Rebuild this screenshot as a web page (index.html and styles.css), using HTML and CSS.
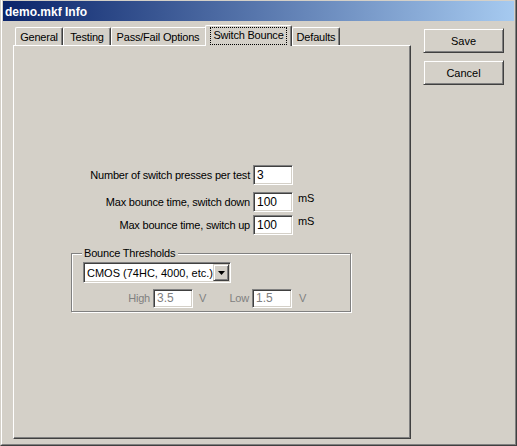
FILE: index.html
```html
<!DOCTYPE html>
<html>
<head>
<meta charset="utf-8">
<link rel="stylesheet" href="styles.css">
</head>
<body>
<div class="window">
  <div class="frame">
    <div class="titlebar"><span class="title">demo.mkf Info</span></div>
    <div class="body">
      <div class="tabctl">
        <div class="tabs">
          <div class="tab t-general">General</div>
          <div class="tab t-testing">Testing</div>
          <div class="tab t-pass">Pass/Fail Options</div>
          <div class="tab sel"><span class="focus">Switch Bounce</span></div>
          <div class="tab t-defaults">Defaults</div>
        </div>
        <div class="panel">
          <div class="form">
            <div class="row r1">
              <span class="lbl">Number of switch presses per test</span>
              <span class="tb">3</span>
            </div>
            <div class="row r2">
              <span class="lbl">Max bounce time, switch down</span>
              <span class="tb">100</span>
              <span class="unit">mS</span>
            </div>
            <div class="row r3">
              <span class="lbl">Max bounce time, switch up</span>
              <span class="tb">100</span>
              <span class="unit">mS</span>
            </div>
            <fieldset class="group">
              <legend class="legend">Bounce Thresholds</legend>
              <div class="combo">
                <span class="combo-text">CMOS (74HC, 4000, etc.)</span>
                <span class="combo-btn"><svg width="7" height="4" viewBox="0 0 7 4"><path d="M0 0H7L3.5 4Z" fill="#000"/></svg></span>
              </div>
              <div class="levels">
                <span class="dl dl-high">High</span>
                <span class="tb dis">3.5</span>
                <span class="dl dv">V</span>
                <span class="dl dl-low">Low</span>
                <span class="tb dis">1.5</span>
                <span class="dl dv2">V</span>
              </div>
            </fieldset>
          </div>
        </div>
      </div>
      <div class="buttons">
        <div class="btn">Save</div>
        <div class="btn">Cancel</div>
      </div>
    </div>
  </div>
</div>
</body>
</html>
```

FILE: styles.css
```css
* { box-sizing: border-box; }
html, body {
  margin: 0;
  padding: 0;
  background: #d4d0c8;
}
body {
  font-family: "Liberation Sans", Arial, sans-serif;
  font-size: 11px;
  letter-spacing: -0.2px;
  color: #000;
}
.window {
  width: 517px;
  height: 446px;
  border-left: 1px solid #d4d0c8;
  border-right: 1px solid #404040;
  border-bottom: 1px solid #404040;
  background: #d4d0c8;
}
.frame {
  height: 100%;
  border-left: 1px solid #fff;
  border-right: 1px solid #808080;
  border-bottom: 1px solid #808080;
  padding: 1px 1px 1px 1px;
  display: flex;
  flex-direction: column;
}
.titlebar {
  height: 20px;
  flex: none;
  background: linear-gradient(to right, #0a246a, #a6caf0);
  display: flex;
  align-items: center;
  padding-left: 2px;
  padding-top: 1px;
}
.title {
  color: #fff;
  font-weight: bold;
  font-size: 12px;
  letter-spacing: 0;
  line-height: 14px;
}
.body {
  flex: 1;
  display: flex;
  padding: 4px 0 0 10px;
  gap: 12px;
}
.tabctl {
  width: 398px;
  display: flex;
  flex-direction: column;
}
.tabs {
  height: 20px;
  display: flex;
  align-items: flex-end;
  padding-left: 2px;
  position: relative;
  z-index: 1;
}
.tab {
  height: 18px;
  border-left: 1px solid #fff;
  border-top: 1px solid #fff;
  border-right: 1px solid #404040;
  border-top-left-radius: 2px;
  border-top-right-radius: 2px;
  box-shadow: inset -1px 0 0 #808080;
  display: flex;
  align-items: center;
  justify-content: center;
  line-height: 13px;
  padding-top: 2px;
  background: #d4d0c8;
  white-space: nowrap;
}
.t-general { width: 48px; }
.t-testing { width: 48px; }
.t-pass { width: 96px; padding-right: 2px; }
.t-defaults { width: 48px; }
.tab.sel {
  width: 87px;
  height: 21px;
  margin-left: -2px;
  margin-bottom: -1px;
  position: relative;
  z-index: 2;
  align-items: flex-start;
  padding-top: 1px;
}
.focus {
  border: 1px dotted #000;
  padding: 1px 2px 2px 2px;
  line-height: 13px;
}
.panel {
  height: 394px;
  border-left: 1px solid #fff;
  border-top: 1px solid #fff;
  border-right: 1px solid #404040;
  border-bottom: 1px solid #404040;
  box-shadow: inset -1px -1px 0 #808080;
  padding: 119px 0 0 57px;
}
.form {
  display: flex;
  flex-direction: column;
  align-items: flex-start;
}
.row {
  display: flex;
  align-items: center;
  height: 20px;
  gap: 3px;
}
.r1 { margin-bottom: 7px; }
.r2 { margin-bottom: 3px; }
.lbl {
  width: 179px;
  text-align: right;
  white-space: nowrap;
}
.tb {
  width: 40px;
  height: 20px;
  background: #fff;
  border: 1px solid;
  border-color: #808080 #fff #fff #808080;
  box-shadow: inset 1px 1px 0 #404040, inset -1px -1px 0 #d4d0c8;
  padding: 3px 0 0 3px;
  line-height: 13px;
  font-size: 12px;
  letter-spacing: 0;
}
.unit {
  margin-left: 2px;
  align-self: flex-start;
  line-height: 13px;
}
.group {
  margin: 12px 0 0 0;
  width: 280px;
  min-width: 0;
  padding: 2px 0 3px 11px;
  border: 1px solid #808080;
  box-shadow: 1px 1px 0 #fff, inset 1px 1px 0 #fff;
}
.legend {
  padding: 0 3px 0 2px;
  margin-left: -1px;
  line-height: 13px;
  background: #d4d0c8;
}
.combo {
  width: 148px;
  height: 21px;
  background: #fff;
  border: 1px solid;
  border-color: #808080 #fff #fff #808080;
  box-shadow: inset 1px 1px 0 #404040, inset -1px -1px 0 #d4d0c8;
  display: flex;
  align-items: center;
  padding: 1px 1px 1px 3px;
  font-size: 11px;
  letter-spacing: 0;
}
.combo-text {
  flex: 1;
  line-height: 14px;
  white-space: nowrap;
  overflow: hidden;
}
.combo-btn {
  width: 16px;
  height: 17px;
  flex: none;
  background: #d4d0c8;
  border: 1px solid;
  border-color: #d4d0c8 #404040 #404040 #d4d0c8;
  box-shadow: inset 1px 1px 0 #fff, inset -1px -1px 0 #808080;
  display: flex;
  align-items: center;
  justify-content: center;
}
.levels {
  margin-top: 6px;
  display: flex;
  align-items: center;
  height: 19px;
  gap: 3px;
}
.levels .tb { height: 19px; padding-top: 2px; }
.dl { color: #808080; line-height: 13px; }
.dl-high { width: 67px; text-align: right; }
.tb.dis { color: #808080; }
.dv { margin-left: 3px; width: 7px; }
.dl-low { width: 40px; text-align: right; }
.dv2 { margin-left: 4px; }
.buttons {
  padding-top: 3px;
  display: flex;
  flex-direction: column;
  gap: 7px;
}
.btn {
  width: 81px;
  height: 25px;
  border: 1px solid;
  border-color: #d4d0c8 #404040 #404040 #d4d0c8;
  box-shadow: inset 1px 1px 0 #fff, inset -1px -1px 0 #808080;
  display: flex;
  align-items: center;
  justify-content: center;
  font-size: 11px;
  letter-spacing: 0;
}
```
